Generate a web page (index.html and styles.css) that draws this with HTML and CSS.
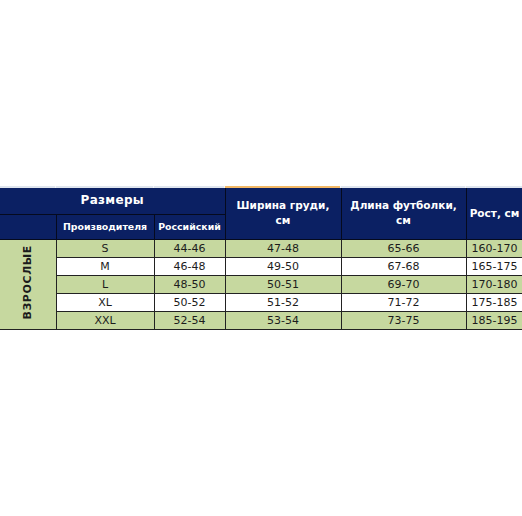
FILE: index.html
```html
<!DOCTYPE html>
<html lang="ru">
<head>
    <meta charset="UTF-8">
    <meta name="viewport" content="width=device-width, initial-scale=1.0">
    <title>Таблица размеров</title>
    <link rel="stylesheet" href="styles.css">
</head>
<body>
    <div class="sheet">
        <div class="ruler">
            <div class="ruler-cell w1"></div>
            <div class="ruler-cell w2"></div>
            <div class="ruler-cell w3"></div>
            <div class="ruler-cell w4 selected"></div>
            <div class="ruler-cell w5"></div>
            <div class="ruler-cell w6"></div>
        </div>
        <table class="size-table">
            <colgroup>
                <col class="w1">
                <col class="w2">
                <col class="w3">
                <col class="w4">
                <col class="w5">
                <col class="w6">
            </colgroup>
            <thead>
                <tr class="head-top">
                    <th colspan="3" class="title">Размеры</th>
                    <th rowspan="2">Ширина груди,<br>см</th>
                    <th rowspan="2">Длина футболки,<br>см</th>
                    <th rowspan="2" class="nowrap">Рост, см</th>
                </tr>
                <tr class="head-sub">
                    <th></th>
                    <th class="small">Производителя</th>
                    <th class="small">Российский</th>
                </tr>
            </thead>
            <tbody>
                <tr class="green">
                    <td rowspan="5" class="group"><span>ВЗРОСЛЫЕ</span></td>
                    <td>S</td><td>44-46</td><td>47-48</td><td>65-66</td><td>160-170</td>
                </tr>
                <tr>
                    <td>M</td><td>46-48</td><td>49-50</td><td>67-68</td><td>165-175</td>
                </tr>
                <tr class="green">
                    <td>L</td><td>48-50</td><td>50-51</td><td>69-70</td><td>170-180</td>
                </tr>
                <tr>
                    <td>XL</td><td>50-52</td><td>51-52</td><td>71-72</td><td>175-185</td>
                </tr>
                <tr class="green">
                    <td>XXL</td><td>52-54</td><td>53-54</td><td>73-75</td><td>185-195</td>
                </tr>
            </tbody>
        </table>
    </div>
</body>
</html>
```

FILE: styles.css
```css
* {
    margin: 0;
    padding: 0;
    box-sizing: border-box;
}
body {
    font-family: "DejaVu Sans", Verdana, sans-serif;
    background: #fff;
    width: 522px;
    overflow: hidden;
}
.sheet {
    padding-top: 186px;
    width: 523px;
}
.w1 { width: 56px; }
.w2 { width: 98px; }
.w3 { width: 71px; }
.w4 { width: 116px; }
.w5 { width: 125px; }
.w6 { width: 57px; }
.ruler {
    display: flex;
    height: 2px;
}
.ruler-cell {
    background: #dfe5ee;
    border-right: 1px solid #f4f6f9;
}
.ruler-cell.selected {
    background: #f2b866;
}
.size-table {
    border-collapse: collapse;
    table-layout: fixed;
    width: 523px;
    color: #1c1c1c;
}
.size-table th {
    background: #0b2063;
    color: #fff;
    font-weight: bold;
    font-size: 10.5px;
    line-height: 15px;
    border: 1px solid #050a1e;
    text-align: center;
    vertical-align: middle;
}
.head-top th {
    height: 26px;
    border-top: none;
}
.head-top .title {
    font-size: 12px;
    letter-spacing: 0.3px;
    border-left: none;
}
.head-sub th {
    height: 25px;
}
.head-sub th:first-child {
    border-left: none;
}
.size-table th.small {
    font-size: 9.4px;
}
.nowrap {
    white-space: nowrap;
}
.size-table td {
    border: 1px solid #222;
    font-size: 11px;
    height: 18px;
    line-height: 15px;
    text-align: center;
    background: #fff;
}
.size-table .green td {
    background: #c6d89f;
}
.size-table td.group {
    background: #c6d89f;
    border-left: none;
}
.group span {
    display: inline-block;
    writing-mode: vertical-rl;
    transform: rotate(180deg);
    font-weight: bold;
    font-size: 11px;
    letter-spacing: 0.6px;
}
```
